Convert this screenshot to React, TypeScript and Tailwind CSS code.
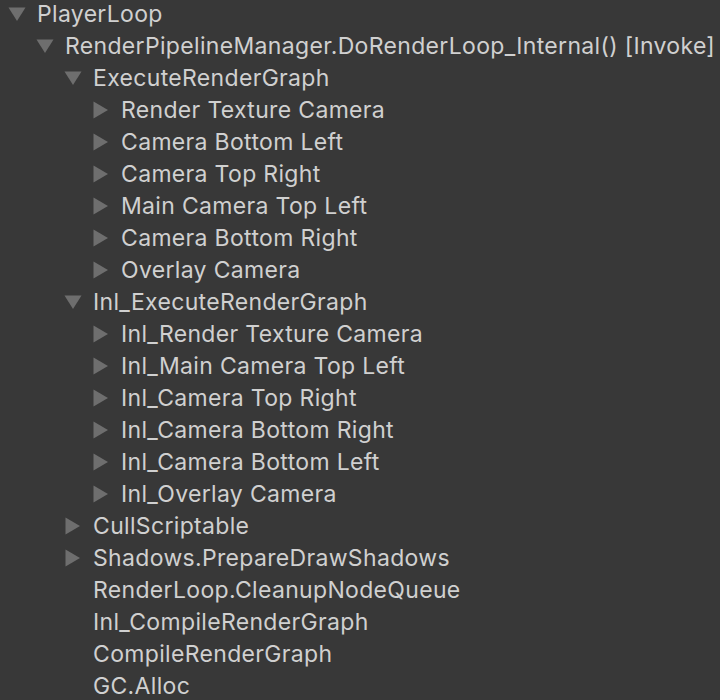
import React from 'react'

type Node = { label: string; depth: number; arrow?: 'open' | 'closed' }

const rows: Node[] = [
  { label: 'PlayerLoop', depth: 0, arrow: 'open' },
  { label: 'RenderPipelineManager.DoRenderLoop_Internal() [Invoke]', depth: 1, arrow: 'open' },
  { label: 'ExecuteRenderGraph', depth: 2, arrow: 'open' },
  { label: 'Render Texture Camera', depth: 3, arrow: 'closed' },
  { label: 'Camera Bottom Left', depth: 3, arrow: 'closed' },
  { label: 'Camera Top Right', depth: 3, arrow: 'closed' },
  { label: 'Main Camera Top Left', depth: 3, arrow: 'closed' },
  { label: 'Camera Bottom Right', depth: 3, arrow: 'closed' },
  { label: 'Overlay Camera', depth: 3, arrow: 'closed' },
  { label: 'Inl_ExecuteRenderGraph', depth: 2, arrow: 'open' },
  { label: 'Inl_Render Texture Camera', depth: 3, arrow: 'closed' },
  { label: 'Inl_Main Camera Top Left', depth: 3, arrow: 'closed' },
  { label: 'Inl_Camera Top Right', depth: 3, arrow: 'closed' },
  { label: 'Inl_Camera Bottom Right', depth: 3, arrow: 'closed' },
  { label: 'Inl_Camera Bottom Left', depth: 3, arrow: 'closed' },
  { label: 'Inl_Overlay Camera', depth: 3, arrow: 'closed' },
  { label: 'CullScriptable', depth: 2, arrow: 'closed' },
  { label: 'Shadows.PrepareDrawShadows', depth: 2, arrow: 'closed' },
  { label: 'RenderLoop.CleanupNodeQueue', depth: 2 },
  { label: 'Inl_CompileRenderGraph', depth: 2 },
  { label: 'CompileRenderGraph', depth: 2 },
  { label: 'GC.Alloc', depth: 2 },
]

const indent = ['pl-[8px]', 'pl-[36px]', 'pl-[64px]', 'pl-[92px]']

function Arrow({ kind }: { kind?: 'open' | 'closed' }) {
  if (!kind) return <span className="w-[29px] shrink-0" />
  return (
    <span className="flex w-[29px] shrink-0 items-center">
      <svg width="18" height="18" viewBox="0 0 18 18">
        {kind === 'open' ? (
          <polygon points="0.5,2.5 17.5,2.5 9,16" fill="#6e6e6e" />
        ) : (
          <polygon points="1.5,0.5 16,9 1.5,17.5" fill="#6e6e6e" />
        )}
      </svg>
    </span>
  )
}

export default function App() {
  return (
    <div
      className="h-[700px] w-[720px] overflow-hidden bg-[#383838] text-[23px] tracking-[0.33px] text-[#d0d0d0]"
      style={{ fontFamily: 'Inter, "Noto Sans", sans-serif' }}
    >
      <div className="-mt-[2px]">
        {rows.map((r, i) => (
          <div key={i} className={`flex h-[32px] items-center whitespace-nowrap ${indent[r.depth]}`}>
            <Arrow kind={r.arrow} />
            <span>{r.label}</span>
          </div>
        ))}
      </div>
    </div>
  )
}
